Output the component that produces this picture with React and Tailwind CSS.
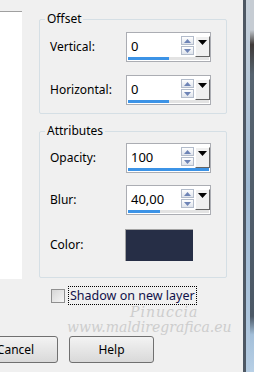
import React from 'react'

const SpinBox = ({ value, pct }) => (
  <div className="w-[85px] h-[30px] border border-[#abadb3] bg-white flex flex-col">
    <div className="flex h-[24px]">
      <div className="flex-1 pl-[4px] pt-[3px] flex items-center text-[13px] text-black">{value}</div>
      <div className="w-[13px] pt-[3px] flex flex-col gap-[1px]">
        <div className="h-[9px] border border-[#b3bccb] bg-gradient-to-b from-white to-[#dfe4ec] flex items-center justify-center">
          <svg width="7" height="4" viewBox="0 0 7 4"><polygon points="0,4 3.5,0 7,4" fill="#6e84b6" /></svg>
        </div>
        <div className="h-[9px] border border-[#b3bccb] bg-gradient-to-b from-white to-[#dfe4ec] flex items-center justify-center">
          <svg width="7" height="4" viewBox="0 0 7 4"><polygon points="0,0 7,0 3.5,4" fill="#6e84b6" /></svg>
        </div>
      </div>
      <div className="ml-[1px] mt-[3px] w-[15px] h-[21px] bg-[#f0f0f0] border border-t-white border-l-white border-r-[#646464] border-b-[#646464] flex justify-center pt-[3px]">
        <svg width="9" height="5" viewBox="0 0 9 5"><polygon points="0,0 9,0 4.5,5" fill="#000" /></svg>
      </div>
    </div>
    <div className="mx-[1px] h-[3px] bg-[#e3e3e3]">
      <div className="h-full bg-[#3c93e6]" style={{ width: `${pct}%` }} />
    </div>
  </div>
)

const Row = ({ label, children }) => (
  <div className="flex items-center h-[30px]">
    <div className="w-[76px] leading-[16px]">{label}</div>
    {children}
  </div>
)

const Group = ({ title, className, children }) => (
  <div className={`relative border border-[#d5dfe5] rounded-[2px] pl-[10px] ${className}`}>
    <span className="absolute left-[5px] top-[-10px] px-[2px] bg-[#f0f0f0] leading-[18px]">{title}</span>
    {children}
  </div>
)

export default function App() {
  return (
    <div className="w-[254px] h-[372px] bg-[#f0f0f0] flex overflow-hidden relative font-['Noto_Sans',sans-serif] text-[12px] text-black">
      <div className="w-[243px] flex flex-col">
        {/* Top: preview panel + groups */}
        <div className="flex h-[279px]">
          <div className="w-[22px] mt-[11px] h-[268px] bg-white border-t border-[#a0a0a0]" />
          <div className="ml-[17px] w-[188px] pt-[19px] flex flex-col gap-[17px]">
            <Group title="Offset" className="h-[95px] pt-[12px] flex flex-col gap-[13px]">
              <Row label="Vertical:"><SpinBox value="0" pct={50} /></Row>
              <Row label="Horizontal:"><SpinBox value="0" pct={50} /></Row>
            </Group>
            <Group title="Attributes" className="h-[147px] pt-[11px] flex flex-col gap-[12px]">
              <Row label="Opacity:"><SpinBox value="100" pct={100} /></Row>
              <Row label="Blur:"><SpinBox value="40,00" pct={40} /></Row>
              <div className="flex items-center h-[32px] mt-[2px]">
                <div className="w-[75px] leading-[16px]">Color:</div>
                <div className="w-[68px] h-[32px] bg-[#262e46] border-t border-l border-[#a3a3a3]" />
              </div>
            </Group>
          </div>
        </div>

        {/* Checkbox */}
        <div className="mt-[7px] pl-[51px] flex items-center h-[19px]">
          <div className="w-[14px] h-[14px] border border-[#8f8f8f] bg-gradient-to-br from-[#d6d6d6] to-[#f6f6f6]" />
          <span className="ml-[3px] h-[19px] px-[1px] border border-dotted border-black leading-[17px] text-[12.5px] text-[#10104a]">Shadow on new layer</span>
        </div>

        {/* Buttons */}
        <div className="mt-[31px] ml-[-27px] flex gap-[11px]">
          <button className="w-[85px] h-[27px] rounded-[3px] border border-[#707070] bg-gradient-to-b from-[#f3f3f3] to-[#d9d9d9] leading-[16px]">Cancel</button>
          <button className="w-[85px] h-[27px] rounded-[3px] border border-[#707070] bg-gradient-to-b from-[#f3f3f3] to-[#d9d9d9] leading-[16px]">Help</button>
        </div>
      </div>

      {/* Window edge */}
      <div className="w-[11px] flex">
        <div className="w-[3px] bg-[#4e5864]" />
        <div className="w-[4px] bg-gradient-to-b from-[#c9d2db] via-[#9db8d2] to-[#b4cbe1]" />
        <div className="w-[4px] bg-[linear-gradient(to_bottom,#c6ccd3_0%,#c6ccd3_8%,#3f3a38_12%,#56636f_20%,#4b5866_85%,#a3bfd9_90%,#b8d0e6_100%)]" />
      </div>

      {/* Watermark */}
      <div className="absolute left-[130px] top-[306px] text-[14px] italic font-['DejaVu_Serif',serif] text-[#cdcdcd] leading-[13px] tracking-[1px]">Pinuccia</div>
      <div className="absolute left-[67px] top-[320px] text-[14px] italic font-['DejaVu_Serif',serif] text-[#cdcdcd] leading-[14px]">www.maldiregrafica.eu</div>
    </div>
  )
}
